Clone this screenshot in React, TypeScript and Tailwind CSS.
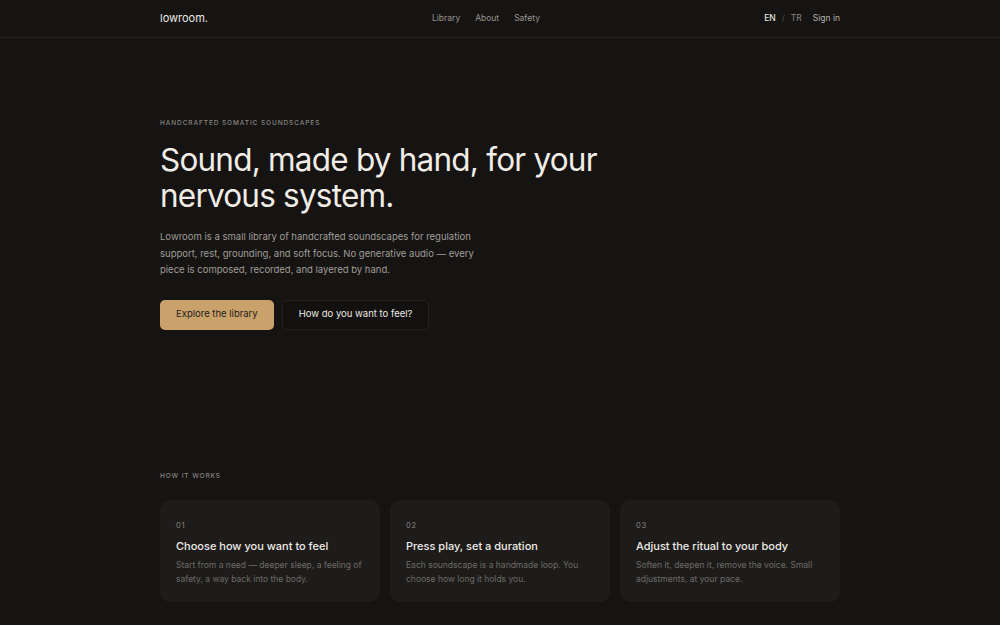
import { Fragment } from 'react'

// ── Data ──────────────────────────────────────────────────────────────────────

const navLinks = ['Library', 'About', 'Safety']

interface Step {
  num: string
  title: string
  body: string
}

const steps: Step[] = [
  {
    num: '01',
    title: 'Choose how you want to feel',
    body: 'Start from a need — deeper sleep, a feeling of safety, a way back into the body.',
  },
  {
    num: '02',
    title: 'Press play, set a duration',
    body: 'Each soundscape is a handmade loop. You choose how long it holds you.',
  },
  {
    num: '03',
    title: 'Adjust the ritual to your body',
    body: 'Soften it, deepen it, remove the voice. Small adjustments, at your pace.',
  },
]

// ── Pieces ────────────────────────────────────────────────────────────────────

function Header() {
  return (
    <header className="border-b border-white/[0.06]">
      <div className="mx-auto flex h-[37px] w-[680px] items-center">
        <span className="w-[272px] text-[11px] text-[#ece8e2]">lowroom.</span>
        <nav className="flex items-center gap-[15px] text-[8.5px] text-[#9a958e]">
          {navLinks.map((l) => (
            <span key={l}>{l}</span>
          ))}
        </nav>
        <div className="ml-auto flex items-center text-[8.5px]">
          <span className="font-medium text-[#e6e2dc]">EN</span>
          <span className="mx-[6px] text-[#55514d]">/</span>
          <span className="text-[#8a857f]">TR</span>
          <span className="ml-[11px] text-[#b8b3ad]">Sign in</span>
        </div>
      </div>
    </header>
  )
}

function StepCard({ step }: { step: Step }) {
  return (
    <div className="h-[102px] rounded-[10px] bg-[#1d1c1b] px-[16px] pt-[21px]">
      <p className="text-[7.5px] leading-[10px] tracking-[0.1em] text-[#8c857b]">{step.num}</p>
      <h3 className="mt-[8px] text-[11px] font-medium leading-[14px] text-[#efebe5]">
        {step.title}
      </h3>
      <p className="mt-[5px] text-[8.5px] leading-[14px] text-[#6e6a65]">{step.body}</p>
    </div>
  )
}

// ── Page ──────────────────────────────────────────────────────────────────────

export default function App() {
  return (
    <div
      className="min-h-[625px] bg-[#151413] text-white"
      style={{ fontFamily: 'Inter, "Noto Sans", sans-serif' }}
    >
      <Header />

      <main className="mx-auto w-[680px]">
        {/* Hero */}
        <section className="pt-[80px]">
          <p className="text-[6.5px] font-medium leading-[10px] tracking-[0.14em] text-[#8a857f]">
            HANDCRAFTED SOMATIC SOUNDSCAPES
          </p>
          <h1 className="mt-[14px] text-[31.5px] leading-[36px] tracking-[-0.025em] text-[#f1ede6]">
            Sound, made by hand, for your
            <br />
            nervous system.
          </h1>
          <p className="mt-[15px] w-[330px] text-[9.5px] leading-[16.5px] text-[#a19c96]">
            Lowroom is a small library of handcrafted soundscapes for regulation support, rest,
            grounding, and soft focus. No generative audio — every piece is composed, recorded, and
            layered by hand.
          </p>
          <div className="mt-[21px] flex gap-[8px]">
            <button className="h-[30px] rounded-[5px] bg-[#c9a16b] px-[16px] text-[9.5px] text-[#23201c]">
              Explore the library
            </button>
            <button className="h-[30px] rounded-[5px] border border-white/[0.07] bg-[#121110] px-[16px] text-[9.5px] text-[#ece8e2]">
              How do you want to feel?
            </button>
          </div>
        </section>

        {/* How it works */}
        <section className="pt-[141px]">
          <p className="text-[6.5px] font-medium leading-[10px] tracking-[0.14em] text-[#8a857f]">
            HOW IT WORKS
          </p>
          <div className="mt-[19px] grid grid-cols-3 gap-[10px]">
            {steps.map((s) => (
              <Fragment key={s.num}>
                <StepCard step={s} />
              </Fragment>
            ))}
          </div>
        </section>
      </main>
    </div>
  )
}
